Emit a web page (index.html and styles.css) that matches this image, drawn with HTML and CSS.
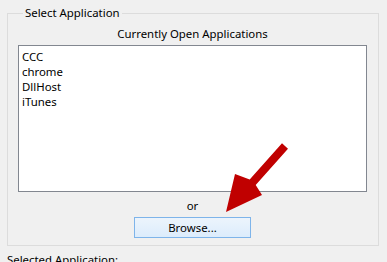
FILE: index.html
```html
<!DOCTYPE html>
<html lang="en">
<head>
  <meta charset="UTF-8" />
  <title>Select Application</title>
  <link rel="stylesheet" href="styles.css">
</head>
<body>
  <fieldset class="group">
    <legend>Select Application</legend>
    <div class="caption">Currently Open Applications</div>
    <ul class="listbox">
      <li>CCC</li>
      <li>chrome</li>
      <li>DllHost</li>
      <li>iTunes</li>
    </ul>
    <div class="or">or</div>
    <button type="button" class="browse">Browse...</button>
  </fieldset>
  <div class="selected">Selected Application:</div>

  <svg class="arrow" width="387" height="262" viewBox="0 0 387 262">
    <polygon fill="#c00000" points="226,212 235,174 249.7,179.5 282,143.3 288,148.7 255.7,184.9 262,195"/>
  </svg>
</body>
</html>
```

FILE: styles.css
```css
body {
  margin: 0;
  background-color: #f0f0f0;
  font-family: 'Segoe UI', 'Noto Sans', sans-serif;
  font-size: 11.4px;
  color: #000;
  position: relative;
  height: 262px;
  overflow: hidden;
}

.group {
  margin: 5px 8px 0 7px;
  padding: 0 11px 7px 10px;
  border: 1px solid #dcdcdc;
  min-width: 0;
}

.group legend {
  padding: 0 2px;
  margin-left: 5px;
  line-height: 16px;
}

.caption {
  text-align: center;
  line-height: 15px;
  margin-top: 5px;
  margin-bottom: 4px;
}

.listbox {
  list-style: none;
  margin: 0;
  padding: 3px 3px 1px;
  height: 141px;
  background: white;
  border: 1px solid #828790;
}

.listbox li {
  line-height: 15px;
}

.or {
  text-align: center;
  line-height: 15px;
  margin-top: 6px;
}

.browse {
  display: block;
  margin: 4px auto 0;
  width: 117px;
  height: 21px;
  padding: 0;
  border: 1px solid #7eb4ea;
  background: linear-gradient(#ecf4fc, #dcecfc);
  font: inherit;
  color: #000;
}

.selected {
  margin: 6px 0 0 7px;
  line-height: 15px;
}

.arrow {
  position: absolute;
  left: 0;
  top: 0;
  pointer-events: none;
}
```
